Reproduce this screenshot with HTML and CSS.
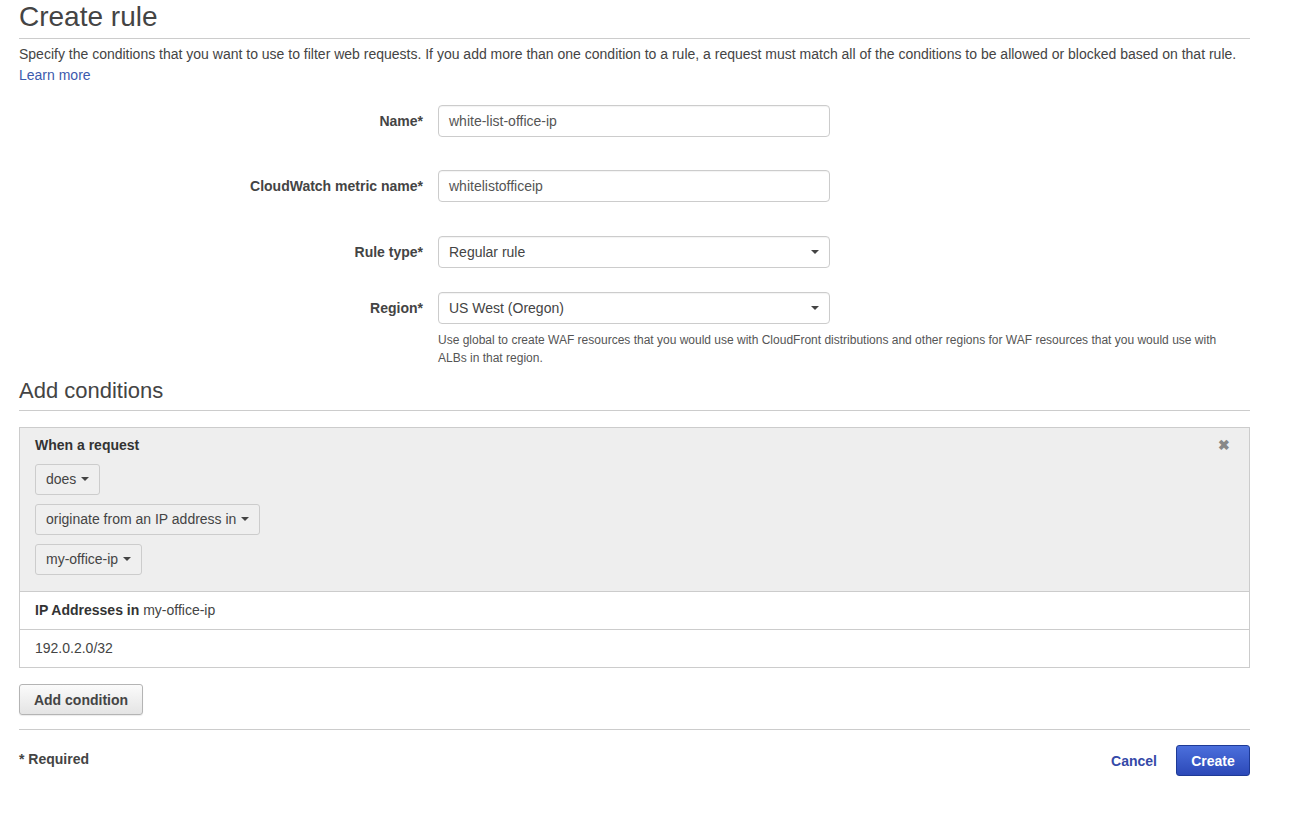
FILE: index.html
```html
<!DOCTYPE html>
<html>
<head>
<meta charset="utf-8">
<link rel="stylesheet" href="styles.css">
</head>
<body>
<div class="page">
  <h1 class="title">Create rule</h1>
  <p class="intro">Specify the conditions that you want to use to filter web requests. If you add more than one condition to a rule, a request must match all of the conditions to be allowed or blocked based on that rule.<br><a class="link" href="#">Learn more</a></p>

  <div class="form">
    <div class="row row-name">
      <label class="label">Name*</label>
      <div class="field"><div class="input">white-list-office-ip</div></div>
    </div>
    <div class="row row-metric">
      <label class="label">CloudWatch metric name*</label>
      <div class="field"><div class="input">whitelistofficeip</div></div>
    </div>
    <div class="row row-type">
      <label class="label">Rule type*</label>
      <div class="field"><div class="select">Regular rule<span class="caret"></span></div></div>
    </div>
    <div class="row row-region">
      <label class="label">Region*</label>
      <div class="field wide">
        <div class="select">US West (Oregon)<span class="caret"></span></div>
        <p class="help">Use global to create WAF resources that you would use with CloudFront distributions and other regions for WAF resources that you would use with ALBs in that region.</p>
      </div>
    </div>
  </div>

  <h2 class="section">Add conditions</h2>

  <div class="panel">
    <div class="cond">
      <div class="cond-head">When a request<span class="close">&#10006;</span></div>
      <div class="drop">does<span class="caret"></span></div>
      <div class="drop">originate from an IP address in<span class="caret"></span></div>
      <div class="drop">my-office-ip<span class="caret"></span></div>
    </div>
    <div class="prow"><b>IP Addresses in</b> my-office-ip</div>
    <div class="prow">192.0.2.0/32</div>
  </div>

  <button class="btn">Add condition</button>

  <div class="footer">
    <span class="req">* Required</span>
    <div class="actions">
      <a class="cancel" href="#">Cancel</a>
      <button class="btn-primary">Create</button>
    </div>
  </div>
</div>
</body>
</html>
```
FILE: styles.css
```css
* { box-sizing: border-box; }
html, body { margin: 0; padding: 0; background: #fff; }
body {
  font-family: "Liberation Sans", Arial, sans-serif;
  font-size: 14px;
  color: #444;
}
.page { width: 1231px; margin-left: 19px; }
.title {
  margin: 0;
  padding-top: 1px;
  font-size: 28px;
  font-weight: normal;
  line-height: 32px;
  color: #444;
  border-bottom: 1px solid #ccc;
  padding-bottom: 5px;
}
.intro {
  margin: 5px 0 0 0;
  line-height: 21px;
  color: #444;
}
.link { color: #3c5aad; text-decoration: none; }

.form { margin-top: 19px; }
.row {
  display: grid;
  grid-template-columns: 404px 392px;
  column-gap: 15px;
  align-items: start;
}
.row-metric { margin-top: 33px; }
.row-type { margin-top: 34px; }
.row-region { margin-top: 24px; }
.row-region { grid-template-columns: 404px 790px; }
.label {
  text-align: right;
  font-weight: bold;
  line-height: 32px;
  color: #444;
}
.input, .select {
  height: 32px;
  width: 392px;
  border: 1px solid #ccc;
  border-radius: 4px;
  background: #fff;
  padding: 0 10px;
  line-height: 30px;
  box-shadow: inset 0 1px 1px rgba(0,0,0,0.05);
}
.input { color: #555; }
.select { position: relative; color: #444; }
.select .caret { position: absolute; right: 10px; top: 13px; }
.caret {
  display: inline-block;
  width: 0; height: 0;
  border-left: 4px solid transparent;
  border-right: 4px solid transparent;
  border-top: 4px solid #444;
  vertical-align: middle;
}
.help {
  margin: 7px 0 0 0;
  font-size: 12px;
  line-height: 18px;
  color: #555;
}

.section {
  margin: 11px 0 0 0;
  font-size: 22px;
  font-weight: normal;
  line-height: 26px;
  color: #444;
  border-bottom: 1px solid #ccc;
  padding-bottom: 6px;
}

.panel {
  margin-top: 16px;
  border: 1px solid #ccc;
}
.cond {
  background: #eee;
  padding: 8px 15px 16px 15px;
  border-bottom: 1px solid #ccc;
}
.cond-head {
  position: relative;
  font-weight: bold;
  line-height: 18px;
  margin-bottom: 10px;
  color: #333;
}
.close {
  position: absolute;
  right: 4px;
  top: 0;
  font-size: 14px;
  color: #888;
}
.drop {
  display: table;
  height: 31px;
  line-height: 29px;
  padding: 0 10px;
  border: 1px solid #ccc;
  border-radius: 3px;
  background: #efefef;
  color: #444;
  margin-bottom: 9px;
}
.drop:last-child { margin-bottom: 0; }
.drop .caret { margin-left: 5px; margin-top: -2px; }
.prow {
  height: 38px;
  line-height: 37px;
  padding: 0 15px;
  border-bottom: 1px solid #ccc;
  color: #444;
}
.prow:last-child { border-bottom: none; height: 37px; }
.prow b { color: #333; }

.btn {
  display: block;
  margin-top: 16px;
  width: 124px;
  height: 31px;
  font-family: inherit;
  font-size: 14px;
  font-weight: bold;
  color: #444;
  border: 1px solid #b4b4b4;
  border-radius: 3px;
  background: linear-gradient(#fbfbfb, #e4e4e4);
  padding: 0;
  box-shadow: 0 1px 1px rgba(0,0,0,0.08);
}

.footer {
  margin-top: 14px;
  border-top: 1px solid #ccc;
  padding-top: 15px;
  display: flex;
  justify-content: space-between;
  align-items: flex-start;
}
.req { font-weight: bold; line-height: 30px; margin-top: -1px; color: #444; }
.actions { display: flex; align-items: center; gap: 19px; }
.cancel {
  color: #3449a8;
  font-weight: bold;
  text-decoration: none;
}
.btn-primary {
  width: 74px;
  height: 31px;
  font-family: inherit;
  font-size: 14px;
  font-weight: bold;
  color: #fff;
  border: 1px solid #1e3a96;
  border-radius: 3px;
  background: linear-gradient(#4b6fdc, #2c49b8);
  padding: 0;
}
```
